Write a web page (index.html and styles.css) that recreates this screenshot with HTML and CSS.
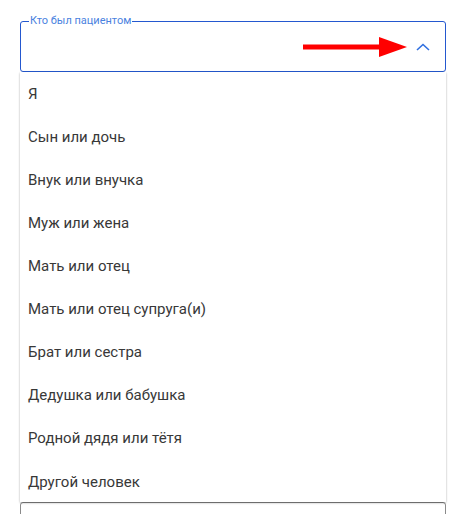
FILE: index.html
```html
<!DOCTYPE html>
<html lang="ru">
<head>
<meta charset="utf-8">
<link rel="stylesheet" href="styles.css">
</head>
<body>
<div class="page">
  <div class="select">
    <fieldset class="field field-active">
      <legend class="field-label">Кто был пациентом</legend>
      <div class="field-body">
        <svg class="chevron" width="14" height="8" viewBox="0 0 14 8"><polyline points="1,7 7,1.5 13,7" fill="none" stroke="#2f6fe0" stroke-width="1.6"/></svg>
      </div>
    </fieldset>
    <svg class="annot" width="110" height="24" viewBox="0 0 110 24"><rect x="0" y="7.5" width="80" height="5" fill="#f00"/><polygon points="76,0 104,10 76,20" fill="#f00"/></svg>
    <ul class="menu">
      <li class="menu-item">Я</li>
      <li class="menu-item">Сын или дочь</li>
      <li class="menu-item">Внук или внучка</li>
      <li class="menu-item">Муж или жена</li>
      <li class="menu-item">Мать или отец</li>
      <li class="menu-item">Мать или отец супруга(и)</li>
      <li class="menu-item">Брат или сестра</li>
      <li class="menu-item">Дедушка или бабушка</li>
      <li class="menu-item">Родной дядя или тётя</li>
      <li class="menu-item">Другой человек</li>
    </ul>
  </div>
  <fieldset class="field field-next"></fieldset>
</div>
</body>
</html>
```
FILE: styles.css
```css
html, body {
  margin: 0;
  padding: 0;
  background: #fff;
}
.page {
  padding: 15px 8px 0 20px;
  width: 426px;
  height: 499px;
  overflow: hidden;
  font-family: Roboto, "Noto Sans", sans-serif;
}
.select {
  position: relative;
}
.field {
  margin: 0;
  padding: 0 10px;
  border-radius: 3px;
  box-sizing: border-box;
  width: 426px;
  min-width: 0;
}
.field-active {
  border: 1px solid #2458cf;
  height: 57px;
}
.field-label {
  font-size: 11px;
  line-height: 12px;
  color: #4a82e0;
  padding: 0 1px;
  margin-left: -2px;
}
.field-body {
  height: 43px;
  display: flex;
  align-items: center;
  justify-content: flex-end;
  padding-right: 5px;
}
.chevron {
  display: block;
  margin-top: -4px;
}
.annot {
  position: absolute;
  left: 283px;
  top: 22px;
}
.menu {
  position: absolute;
  left: 0;
  right: 0;
  top: 57px;
  margin: 0;
  padding: 0;
  list-style: none;
  background: #fff;
  box-shadow: 0 1px 2px rgba(0,0,0,0.28), 0 0 2px rgba(0,0,0,0.06);
  z-index: 2;
}
.menu-item {
  height: 43px;
  display: flex;
  align-items: center;
  padding-left: 8px;
  font-size: 15px;
  color: #383838;
}
.menu-item:last-child {
  padding-top: 2px;
  height: 41px;
}
.field-next {
  margin-top: 430px;
  height: 60px;
  border: 1px solid #8a8a8a;
}
```
